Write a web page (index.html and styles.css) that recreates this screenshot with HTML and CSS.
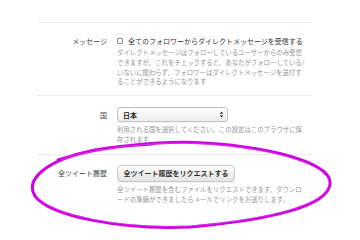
FILE: index.html
```html
<!DOCTYPE html>
<html lang="ja">
<head>
<meta charset="utf-8">
<link rel="stylesheet" href="styles.css">
</head>
<body>
<div class="page">
  <div class="settings">
    <div class="row row-dm">
      <div class="label">メッセージ</div>
      <div class="field">
        <label class="check"><span class="box"></span>全てのフォロワーからダイレクトメッセージを受信する</label>
        <p class="help">ダイレクトメッセージはフォローしているユーザーからのみ受信<br>できますが、これをチェックすると、あなたがフォローしている/<br>いないに関わらず、フォロワーはダイレクトメッセージを送付す<br>ることができるようになります</p>
      </div>
    </div>
    <div class="row row-country">
      <div class="label">国</div>
      <div class="field">
        <div class="select"><span class="select-text">日本</span>
          <svg class="arrows" width="5" height="7" viewBox="0 0 5 7"><path d="M2.5 0.5 L4.3 2.8 H0.7 Z M2.5 6.5 L4.3 4.2 H0.7 Z" fill="#333"/></svg>
        </div>
        <p class="help">利用される国を選択してください。この設定はこのブラウザに保<br>存されます。</p>
      </div>
    </div>
    <div class="row row-archive">
      <div class="label">全ツイート履歴</div>
      <div class="field">
        <button class="btn">全ツイート履歴をリクエストする</button>
        <p class="help">全ツイート履歴を含むファイルをリクエストできます。ダウンロ<br>ードの準備ができましたらメールでリンクをお送りします。</p>
      </div>
    </div>
  </div>
  <svg class="circle" width="360" height="240" viewBox="0 0 360 240">
    <path d="M58 160 C 100 146, 165 140, 205 143 C 280 148, 332 165, 330 184 C 328 206, 270 220, 190 227 C 120 230, 50 216, 35 196 C 25 180, 45 160, 95 150 C 112 147, 130 145, 152 144" fill="none" stroke="#d000e0" stroke-width="3" stroke-linecap="round" stroke-linejoin="round"/>
    <path d="M62 159 C 102 146, 166 141, 205 144 C 279 149, 331 166, 329 184 C 327 205, 270 219, 190 226 C 121 229, 51 215, 36 196" fill="none" stroke="#e04cf0" stroke-width="1" stroke-opacity="0.6"/>
  </svg>
</div>
</body>
</html>
```

FILE: styles.css
```css
html, body {
  margin: 0;
  padding: 0;
  background: #fff;
}

body {
  font-family: "Noto Sans CJK JP", "Noto Sans", sans-serif;
  color: #333;
}

.page {
  position: relative;
  width: 360px;
  height: 240px;
  overflow: hidden;
  padding-top: 22px;
  box-sizing: border-box;
  background: #fff;
}

.settings {
  margin-left: 38px;
  width: 274px;
}

.row {
  display: flex;
  gap: 10px;
  border-top: 1px solid #ececec;
}

.label {
  flex: 0 0 69px;
  text-align: right;
  font-size: 7px;
  line-height: 10px;
  color: #444;
}

.field {
  flex: 1 1 auto;
  min-width: 0;
  display: flex;
  flex-direction: column;
  align-items: flex-start;
}

.help {
  margin: 0;
  font-size: 6.4px;
  line-height: 9.8px;
  color: #959595;
  white-space: nowrap;
}

.row-dm {
  padding: 13px 0 8px;
}

.check {
  display: flex;
  align-items: center;
  font-size: 7px;
  line-height: 10px;
  color: #333;
  margin-bottom: 2px;
}

.box {
  width: 4px;
  height: 4px;
  border: 0.7px solid #8a8a8a;
  border-radius: 1px;
  margin-right: 5px;
  background: #fff;
}

.row-country {
  padding: 11px 0 9px;
}

.row-country .label {
  padding-top: 2px;
  line-height: 12px;
}

.select {
  width: 111px;
  height: 15px;
  box-sizing: border-box;
  border: 1px solid #c4c4c4;
  border-radius: 3px;
  background: linear-gradient(#ffffff, #ececec);
  display: flex;
  align-items: center;
  justify-content: space-between;
  padding: 0 3px 0 5px;
  margin-bottom: 3px;
  box-shadow: 0 0.5px 0.5px rgba(0,0,0,0.08);
}

.select-text {
  font-size: 7px;
  font-weight: 700;
  color: #222;
  line-height: 10px;
}

.arrows {
  display: block;
}

.row-archive {
  padding: 10px 0 20px;
}

.row-archive .label {
  padding-top: 3.5px;
}

.btn {
  width: 118px;
  height: 17px;
  box-sizing: border-box;
  border: 1px solid #c8c8c8;
  border-radius: 4px;
  background: linear-gradient(#fefefe, #e4e4e4);
  font-family: "Noto Sans CJK JP", "Noto Sans", sans-serif;
  font-size: 7px;
  font-weight: 700;
  color: #333;
  padding: 0;
  margin: 0 0 3px;
  line-height: 10px;
  box-shadow: 0 0.5px 0.5px rgba(0,0,0,0.1);
}

.circle {
  position: absolute;
  left: 0;
  top: 0;
  pointer-events: none;
}
```
